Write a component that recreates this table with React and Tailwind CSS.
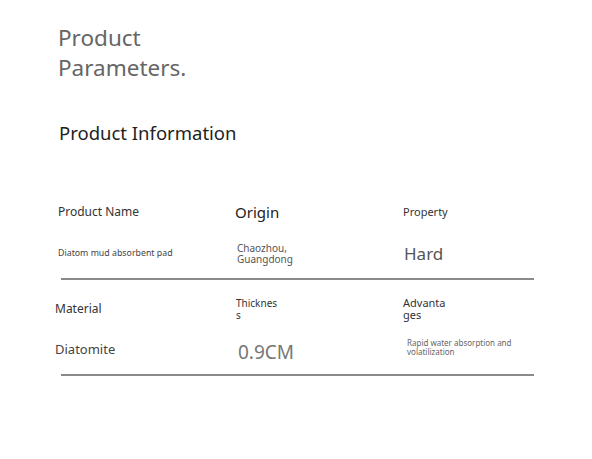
export default function App() {
  const font = { fontFamily: '"Noto Sans", "Open Sans", sans-serif' };
  return (
    <div className="w-[592px] h-[459px] bg-white relative overflow-hidden" style={font}>
      <div className="pl-[58px] pt-[23px]">
        <h1 className="text-[22.5px] leading-[30px] text-[#666] font-normal">
          Product
          <br />
          Parameters.
        </h1>
        <h2 className="mt-[37px] text-[18.5px] leading-[26px] text-[#222] pl-[1px]">Product Information</h2>
      </div>

      {/* Row 1 */}
      <div className="mt-[55px] grid grid-cols-[178px_167px_150px] pl-[58px] items-center h-[22px]">
        <div className="text-[12px] text-[#333]">Product Name</div>
        <div className="text-[15px] text-[#222] -ml-[1px]">Origin</div>
        <div className="text-[11px] text-[#333]">Property</div>
      </div>
      <div className="mt-[18px] grid grid-cols-[178px_167px_150px] pl-[58px] items-center h-[22px]">
        <div className="text-[8.8px] text-[#444]">Diatom mud absorbent pad</div>
        <div className="text-[10px] leading-[11px] text-[#555] ml-[1px]">
          Chaozhou,
          <br />
          Guangdong
        </div>
        <div className="text-[17px] text-[#555] ml-[1px]">Hard</div>
      </div>
      <div className="mt-[15px] ml-[61px] w-[473px] h-[2px] bg-[#8a8a8a]"></div>

      {/* Row 2 */}
      <div className="mt-[17px] grid grid-cols-[181px_167px_150px] pl-[55px] items-center h-[24px]">
        <div className="text-[12px] text-[#333]">Material</div>
        <div className="text-[10px] leading-[12px] text-[#333]">
          Thicknes
          <br />
          s
        </div>
        <div className="text-[11px] leading-[12px] text-[#333]">
          Advanta
          <br />
          ges
        </div>
      </div>
      <div className="mt-[12px] grid grid-cols-[181px_170px_150px] pl-[55px] items-center h-[22px]">
        <div className="text-[13px] text-[#444]">Diatomite</div>
        <div className="text-[19px] text-[#777] mt-[5px] ml-[2px]">0.9CM</div>
        <div className="text-[8px] leading-[9px] text-[#666] mt-[-5px] ml-[1px]">
          Rapid water absorption and
          <br />
          volatilization
        </div>
      </div>
      <div className="mt-[19px] ml-[61px] w-[473px] h-[2px] bg-[#8a8a8a]"></div>
    </div>
  );
}
